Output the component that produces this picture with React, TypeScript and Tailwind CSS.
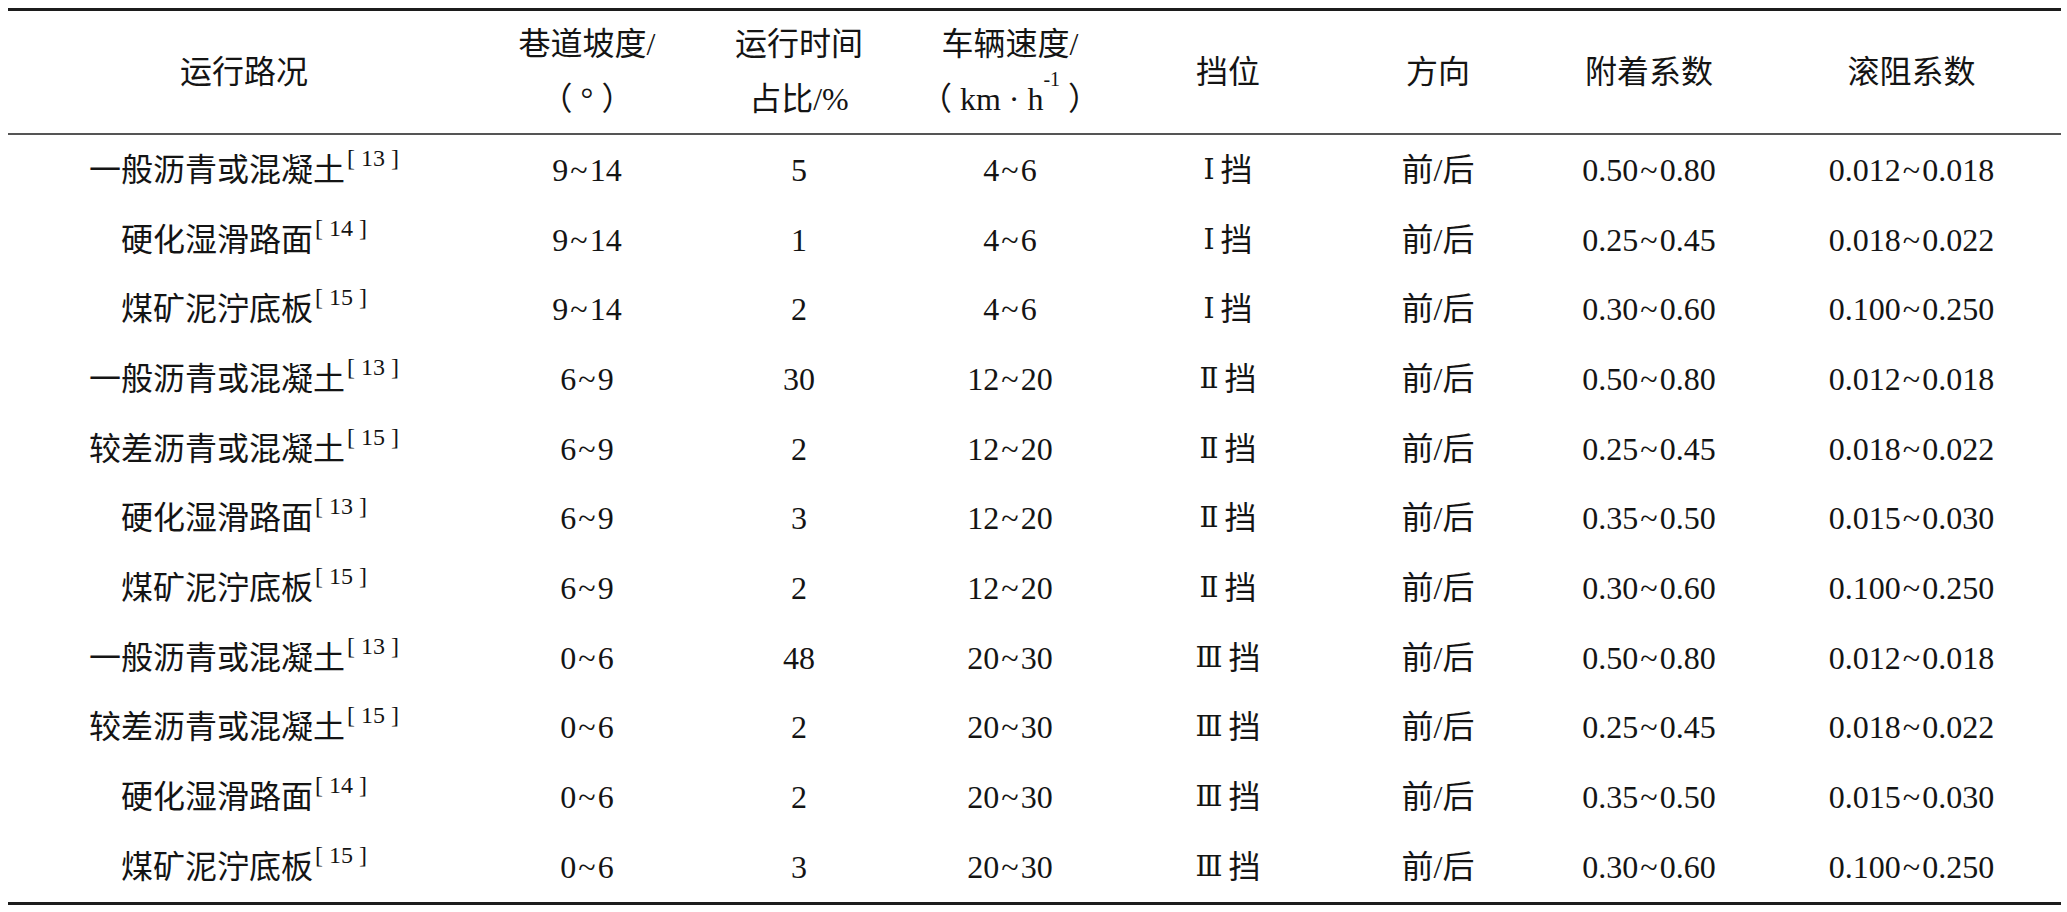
const cols = "grid grid-cols-[472px_214px_210px_212px_224px_196px_226px_299px]";

type Row = {
    road: string;
    ref: string;
    slope: string;
    share: string;
    speed: string;
    gear: string;
    adhesion: string;
    rolling: string;
};

const rows: Row[] = [
    { road: "一般沥青或混凝土", ref: "13", slope: "9~14", share: "5", speed: "4~6", gear: "Ⅰ", adhesion: "0.50~0.80", rolling: "0.012~0.018" },
    { road: "硬化湿滑路面", ref: "14", slope: "9~14", share: "1", speed: "4~6", gear: "Ⅰ", adhesion: "0.25~0.45", rolling: "0.018~0.022" },
    { road: "煤矿泥泞底板", ref: "15", slope: "9~14", share: "2", speed: "4~6", gear: "Ⅰ", adhesion: "0.30~0.60", rolling: "0.100~0.250" },
    { road: "一般沥青或混凝土", ref: "13", slope: "6~9", share: "30", speed: "12~20", gear: "Ⅱ", adhesion: "0.50~0.80", rolling: "0.012~0.018" },
    { road: "较差沥青或混凝土", ref: "15", slope: "6~9", share: "2", speed: "12~20", gear: "Ⅱ", adhesion: "0.25~0.45", rolling: "0.018~0.022" },
    { road: "硬化湿滑路面", ref: "13", slope: "6~9", share: "3", speed: "12~20", gear: "Ⅱ", adhesion: "0.35~0.50", rolling: "0.015~0.030" },
    { road: "煤矿泥泞底板", ref: "15", slope: "6~9", share: "2", speed: "12~20", gear: "Ⅱ", adhesion: "0.30~0.60", rolling: "0.100~0.250" },
    { road: "一般沥青或混凝土", ref: "13", slope: "0~6", share: "48", speed: "20~30", gear: "Ⅲ", adhesion: "0.50~0.80", rolling: "0.012~0.018" },
    { road: "较差沥青或混凝土", ref: "15", slope: "0~6", share: "2", speed: "20~30", gear: "Ⅲ", adhesion: "0.25~0.45", rolling: "0.018~0.022" },
    { road: "硬化湿滑路面", ref: "14", slope: "0~6", share: "2", speed: "20~30", gear: "Ⅲ", adhesion: "0.35~0.50", rolling: "0.015~0.030" },
    { road: "煤矿泥泞底板", ref: "15", slope: "0~6", share: "3", speed: "20~30", gear: "Ⅲ", adhesion: "0.30~0.60", rolling: "0.100~0.250" },
];

// numbers like 0.50~0.80, the tilde sits a little apart
const Range = ({ value }: { value: string }) => {
    const parts = value.split("~");
    if (parts.length < 2) return <span>{value}</span>;
    return (
        <span>
            {parts[0]}
            <span className="mx-[2px]">~</span>
            {parts[1]}
        </span>
    );
};

const Cell = ({ children }: { children: React.ReactNode }) => (
    <div className="flex items-center justify-center whitespace-nowrap">{children}</div>
);

const HeadCell = ({ lines }: { lines: React.ReactNode[] }) => (
    <div className="flex flex-col items-center justify-center whitespace-nowrap leading-[55px]">
        {lines.map((l, i) => (
            <div key={i}>{l}</div>
        ))}
    </div>
);

export default function App() {
    return (
        <div className="h-[912px] w-[2067px] bg-white pt-[8px] pl-[8px] text-[32px] text-[#141414] font-[family-name:Liberation_Serif,Noto_Sans_CJK_SC,serif]">
            <div className="w-[2053px] border-t-[3px] border-b-[3px] border-t-[#1c1c1c] border-b-[#1c1c1c]">
                <div className={`${cols} h-[124px] border-b-2 border-[#555]`}>
                    <HeadCell lines={["运行路况"]} />
                    <HeadCell lines={["巷道坡度/", "（ ° ）"]} />
                    <HeadCell lines={["运行时间", "占比/%"]} />
                    <HeadCell
                        lines={[
                            "车辆速度/",
                            <span>
                                （ km · h<sup className="align-[14px] text-[20px]">-1</sup> ）
                            </span>,
                        ]}
                    />
                    <HeadCell lines={["挡位"]} />
                    <HeadCell lines={["方向"]} />
                    <HeadCell lines={["附着系数"]} />
                    <HeadCell lines={["滚阻系数"]} />
                </div>
                {rows.map((r, i) => (
                    <div key={i} className={`${cols} h-[69.7px]`}>
                        <Cell>
                            {r.road}
                            <sup className="ml-[2px] align-[11px] text-[24px]">[ {r.ref} ]</sup>
                        </Cell>
                        <Cell>
                            <Range value={r.slope} />
                        </Cell>
                        <Cell>{r.share}</Cell>
                        <Cell>
                            <Range value={r.speed} />
                        </Cell>
                        <Cell>
                            <span className="mr-[6px] text-[28px] font-[family-name:DejaVu_Serif,Liberation_Serif,serif]">{r.gear}</span>
                            挡
                        </Cell>
                        <Cell>前/后</Cell>
                        <Cell>
                            <Range value={r.adhesion} />
                        </Cell>
                        <Cell>
                            <Range value={r.rolling} />
                        </Cell>
                    </div>
                ))}
            </div>
        </div>
    );
}
